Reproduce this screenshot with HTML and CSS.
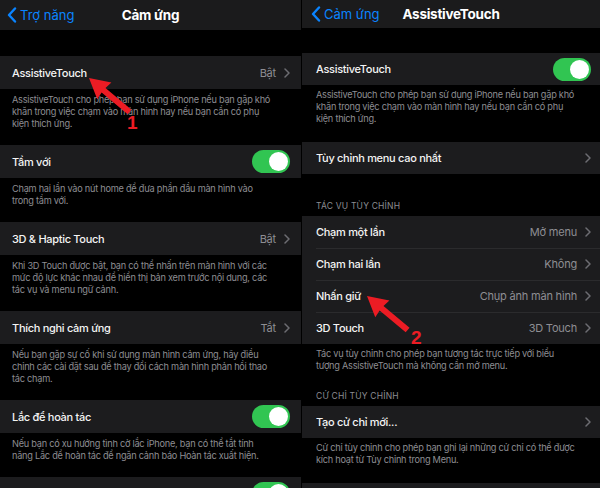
FILE: index.html
```html
<!DOCTYPE html>
<html lang="vi">
<head>
<meta charset="utf-8">
<link rel="stylesheet" href="styles.css">
</head>
<body>
<div class="screen">
  <section class="panel left">
    <header class="nav">
      <div class="back">
        <svg class="back-chev" width="10" height="16" viewBox="0 0 10 16"><polyline points="8,1.5 2,8 8,14.5" fill="none" stroke="#0a84ff" stroke-width="2.4" stroke-linecap="round" stroke-linejoin="round"/></svg>
        <span>Trợ năng</span>
      </div>
      <div class="nav-title">Cảm ứng</div>
      <div></div>
    </header>
    <div class="top-gap"></div>

    <div class="cell">
      <span class="label">AssistiveTouch</span>
      <span class="value">Bật</span>
      <svg class="chev" width="6" height="10" viewBox="0 0 6 10"><polyline points="1,1 5,5 1,9" fill="none" stroke="#6d6d72" stroke-width="1.5" stroke-linecap="round" stroke-linejoin="round"/></svg>
    </div>
    <p class="desc">AssistiveTouch cho phép bạn sử dụng iPhone nếu bạn gặp khó<br>khăn trong việc chạm vào màn hình hay nếu bạn cần có phụ<br>kiện thích ứng.</p>

    <div class="cell">
      <span class="label">Tầm với</span>
      <span class="toggle"><span class="knob"></span></span>
    </div>
    <p class="desc">Chạm hai lần vào nút home để đưa phần đầu màn hình vào<br>trong tầm với.</p>

    <div class="cell">
      <span class="label">3D &amp; Haptic Touch</span>
      <span class="value">Bật</span>
      <svg class="chev" width="6" height="10" viewBox="0 0 6 10"><polyline points="1,1 5,5 1,9" fill="none" stroke="#6d6d72" stroke-width="1.5" stroke-linecap="round" stroke-linejoin="round"/></svg>
    </div>
    <p class="desc">Khi 3D Touch được bật, bạn có thể nhấn trên màn hình với các<br>mức độ lực khác nhau để hiển thị bản xem trước nội dung, các<br>tác vụ và menu ngữ cảnh.</p>

    <div class="cell">
      <span class="label">Thích nghi cảm ứng</span>
      <span class="value">Tắt</span>
      <svg class="chev" width="6" height="10" viewBox="0 0 6 10"><polyline points="1,1 5,5 1,9" fill="none" stroke="#6d6d72" stroke-width="1.5" stroke-linecap="round" stroke-linejoin="round"/></svg>
    </div>
    <p class="desc">Nếu bạn gặp sự cố khi sử dụng màn hình cảm ứng, hãy điều<br>chỉnh các cài đặt sau để thay đổi cách màn hình phản hồi thao<br>tác chạm.</p>

    <div class="cell">
      <span class="label">Lắc để hoàn tác</span>
      <span class="toggle"><span class="knob"></span></span>
    </div>
    <p class="desc">Nếu bạn có xu hướng tình cờ lắc iPhone, bạn có thể tắt tính<br>năng Lắc để hoàn tác để ngăn cảnh báo Hoàn tác xuất hiện.</p>

    <div class="cell">
      <span class="label"></span>
      <span class="toggle"><span class="knob"></span></span>
    </div>
  </section>

  <section class="panel right">
    <header class="nav">
      <div class="back">
        <svg class="back-chev" width="10" height="16" viewBox="0 0 10 16"><polyline points="8,1.5 2,8 8,14.5" fill="none" stroke="#0a84ff" stroke-width="2.4" stroke-linecap="round" stroke-linejoin="round"/></svg>
        <span>Cảm ứng</span>
      </div>
      <div class="nav-title">AssistiveTouch</div>
      <div></div>
    </header>
    <div class="top-gap"></div>

    <div class="cell">
      <span class="label">AssistiveTouch</span>
      <span class="toggle"><span class="knob"></span></span>
    </div>
    <p class="desc">AssistiveTouch cho phép bạn sử dụng iPhone nếu bạn gặp khó<br>khăn trong việc chạm vào màn hình hay nếu bạn cần có phụ<br>kiện thích ứng.</p>

    <div class="cell">
      <span class="label">Tùy chỉnh menu cao nhất</span>
      <svg class="chev" width="6" height="10" viewBox="0 0 6 10"><polyline points="1,1 5,5 1,9" fill="none" stroke="#6d6d72" stroke-width="1.5" stroke-linecap="round" stroke-linejoin="round"/></svg>
    </div>

    <h2 class="section first">TÁC VỤ TÙY CHỈNH</h2>
    <div class="group">
      <div class="cell">
        <span class="label">Chạm một lần</span>
        <span class="value">Mở menu</span>
        <svg class="chev" width="6" height="10" viewBox="0 0 6 10"><polyline points="1,1 5,5 1,9" fill="none" stroke="#6d6d72" stroke-width="1.5" stroke-linecap="round" stroke-linejoin="round"/></svg>
      </div>
      <div class="cell">
        <span class="label">Chạm hai lần</span>
        <span class="value">Không</span>
        <svg class="chev" width="6" height="10" viewBox="0 0 6 10"><polyline points="1,1 5,5 1,9" fill="none" stroke="#6d6d72" stroke-width="1.5" stroke-linecap="round" stroke-linejoin="round"/></svg>
      </div>
      <div class="cell">
        <span class="label">Nhấn giữ</span>
        <span class="value">Chụp ảnh màn hình</span>
        <svg class="chev" width="6" height="10" viewBox="0 0 6 10"><polyline points="1,1 5,5 1,9" fill="none" stroke="#6d6d72" stroke-width="1.5" stroke-linecap="round" stroke-linejoin="round"/></svg>
      </div>
      <div class="cell">
        <span class="label">3D Touch</span>
        <span class="value">3D Touch</span>
        <svg class="chev" width="6" height="10" viewBox="0 0 6 10"><polyline points="1,1 5,5 1,9" fill="none" stroke="#6d6d72" stroke-width="1.5" stroke-linecap="round" stroke-linejoin="round"/></svg>
      </div>
    </div>
    <p class="desc">Tác vụ tùy chỉnh cho phép bạn tương tác trực tiếp với biểu<br>tượng AssistiveTouch mà không cần mở menu.</p>

    <h2 class="section">CỬ CHỈ TÙY CHỈNH</h2>
    <div class="cell">
      <span class="label">Tạo cử chỉ mới...</span>
      <svg class="chev" width="6" height="10" viewBox="0 0 6 10"><polyline points="1,1 5,5 1,9" fill="none" stroke="#6d6d72" stroke-width="1.5" stroke-linecap="round" stroke-linejoin="round"/></svg>
    </div>
    <p class="desc">Cử chỉ tùy chỉnh cho phép bạn ghi lại những cử chỉ có thể được<br>kích hoạt từ Tùy chỉnh trong Menu.</p>

    <div class="cell">
      <span class="label"></span>
    </div>
  </section>

  <svg class="arrows" width="600" height="488" viewBox="0 0 600 488">
    <g transform="translate(89 78) rotate(40)">
      <polygon points="0,0 20,-11 19,-3 53,-3 53,3 19,3 20,11" fill="#ec1c24"/>
    </g>
    <text class="num" x="127" y="129">1</text>
    <g transform="translate(367 296) rotate(40)">
      <polygon points="0,0 20,-11 19,-3 53,-3 53,3 19,3 20,11" fill="#ec1c24"/>
    </g>
    <text class="num" x="411" y="344">2</text>
  </svg>
</div>
</body>
</html>
```

FILE: styles.css
```css
* { box-sizing: border-box; }

body {
  margin: 0;
  background: #000;
  font-family: Inter, "Noto Sans", "DejaVu Sans", sans-serif;
}

.screen {
  position: relative;
  display: flex;
  gap: 1px;
  width: 600px;
  height: 488px;
  overflow: hidden;
  background: #000;
}

.panel {
  display: flex;
  flex-direction: column;
  flex: none;
}

.left { width: 301px; }
.right { width: 298px; }

.nav {
  flex: none;
  display: grid;
  grid-template-columns: 1fr auto 1fr;
  align-items: center;
  height: 30px;
  background: #1b1b1c;
}

.right .nav { height: 28px; }

.back {
  display: flex;
  align-items: center;
  gap: 3px;
  padding-left: 7px;
  color: #0a84ff;
  font-size: 13px;
  white-space: nowrap;
}

.right .back { padding-left: 9px; }

.back-chev { flex: none; }

.nav-title {
  color: #fff;
  font-size: 13.5px;
  font-weight: 700;
  letter-spacing: -0.25px;
  white-space: nowrap;
}

.top-gap { flex: none; height: 26px; }
.right .top-gap { height: 25px; }

.cell {
  flex: none;
  display: flex;
  align-items: center;
  height: 33px;
  padding: 0 11px 0 12px;
  background: #1c1c1e;
}

.right .cell {
  height: 32px;
  padding: 0 9px 0 14px;
}

.label {
  flex: 1;
  color: #f4f4f4;
  font-size: 11px;
  font-weight: 500;
  letter-spacing: -0.3px;
  white-space: nowrap;
}

.value {
  margin-right: 8px;
  color: #8e8e93;
  font-size: 11px;
  letter-spacing: -0.2px;
  white-space: nowrap;
}

.chev { flex: none; }

.toggle {
  position: relative;
  flex: none;
  width: 38px;
  height: 23px;
  border-radius: 12px;
  background: #31c552;
}

.knob {
  position: absolute;
  top: 2px;
  right: 2px;
  width: 19px;
  height: 19px;
  border-radius: 50%;
  background: #fff;
}

.desc {
  flex: none;
  margin: 0;
  padding: 5px 4px 15px 12px;
  color: #8d8d92;
  font-size: 9.2px;
  line-height: 12px;
  letter-spacing: -0.25px;
}

.right .desc { padding: 4px 4px 17px 14px; }

.group .cell + .cell {
  box-shadow: inset 14px 0 0 #1c1c1e, inset 0 0.5px 0 #3a3a3c;
}

.section {
  flex: none;
  margin: 0;
  padding: 0 14px;
  height: 17px;
  color: #8d8d92;
  font-size: 8.5px;
  font-weight: 400;
  line-height: 14px;
  letter-spacing: 0.2px;
}

.section.first {
  height: 42px;
  padding-top: 25px;
}

.arrows {
  position: absolute;
  left: 0;
  top: 0;
  pointer-events: none;
}

.num {
  fill: #ec1c24;
  font-family: "Liberation Sans", Arial, sans-serif;
  font-size: 19px;
  font-weight: 700;
}
```
